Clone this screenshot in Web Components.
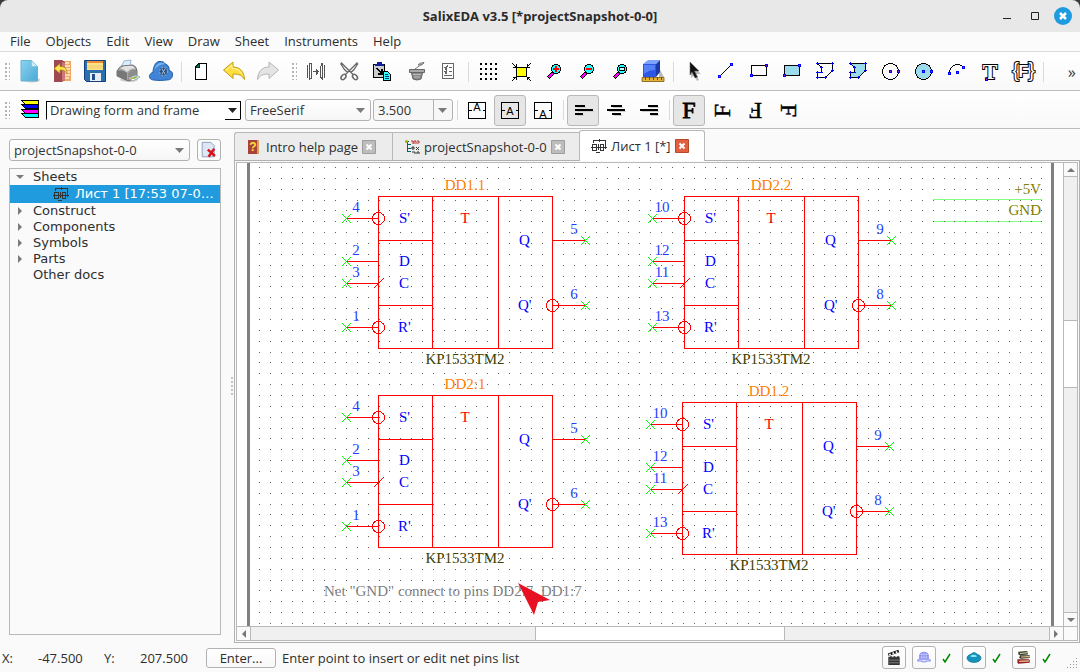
<!DOCTYPE html>
<html lang="en">
<head>
<meta charset="utf-8">
<title>SalixEDA v3.5</title>
<style>
  html, body { height: 100%; margin: 0; background: #3a3a3a; }
  body { font: 13px/16px "Open Sans", "Noto Sans", sans-serif; color: #2e2e2e; }
</style>
</head>
<body>
<salix-window></salix-window>
<script>
const mark = (x, y) => `<path fill="#00f" d="M${x - 1.5} ${y - 1.5}h3v3h-3z"/><path fill="#c2a" d="M${x - .5} ${y - .5}h1v1h-1z"/>`;
const lens = inner => `<g shape-rendering="crispEdges"><path d="M6 19l5-5" stroke="#000" stroke-width="4"/><path d="M6.500 18.500l4-4" stroke="#f0f" stroke-width="2.500"/><circle cx="14" cy="10" r="4.500" fill="#2ff" stroke="#000"/>${inner}</g>`;
const poly = fill => `<path d="M4.500 4.500h15v7l-7 7h-8v-5h4v-5z" fill="${fill}" stroke="#000" shape-rendering="crispEdges"/><path stroke="#00f" shape-rendering="crispEdges" d="M3 4.500h3M4.500 3v3M18 4.500h3M19.500 3v3M18 11.500h3M19.500 10v3M11 18.500h3M12.500 17v3M3 18.500h3M4.500 17v3M3 13.500h3M4.500 12v3M7 8.500h3M8.500 7v3M7 13.500h3"/>`;
const boxA = y => `<path d="M3.500 4.500h17v16h-17zM3.500 12.500h3M17.500 12.500h3" fill="none" stroke="#000" shape-rendering="crispEdges"/><text x="12" y="${y}" text-anchor="middle" font-family="Liberation Sans" font-size="11">A</text>`;
const rotF = a => `<text transform="rotate(${a} 12.500 12.500)" x="12.500" y="20" text-anchor="middle" font-family="Liberation Serif" font-size="24" stroke="#000" stroke-width=".4">F</text>`;
const SHEET = '<g fill="none" stroke="#333" shape-rendering="crispEdges"><path d="M2.500 5v-2.500h12v8h-1M1.500 6.500h4v6h-4zM9.500 6.500h3v6h-3zM0 9.500h16M7.500 6v6M5 14.500h4M8.500 1v3"/></g>';
const ICONS = {
  new: `<defs><linearGradient id="g" x2="1" y2="1"><stop stop-color="#8bd3ee"/><stop offset="1" stop-color="#4aa9d6"/></linearGradient></defs><ellipse cx="15" cy="21" rx="8" ry="2.500" fill="#ccc"/><path d="M4 1.500h10.500l6 6v14.500H4z" fill="url(#g)" stroke="#6ab4d2"/><path d="M14.500 1.500v6h6z" fill="#c9edfa" stroke="#7cc3de" stroke-width=".7"/>`,
  open: `<path d="M7 2h14v20H7z" fill="#f0a862"/><path d="M15 4h4M15 7h5M14 10h6M14 13h6M14 16h6M14 19h5" stroke="#fff0c8" stroke-width="1.500"/><path d="M4 1h8l3 2v18l-3 2H4z" fill="#a04850"/><path d="M12 3l3 1v17l-3 1z" fill="#cc777a"/><path d="M4 9.500l6-5v3c5 0 7 2 7 7-2-3-3.500-3.500-7-3.500v3.500z" fill="#ffe14a" stroke="#a87b1a" stroke-width=".7"/>`,
  save: `<path d="M1.500 1.500h21v21H3.500l-2-2z" fill="#2a6fae" stroke="#173f7d"/><path d="M4 2h16v9H4z" fill="#ffe28a"/><path d="M4 2h16v2H4z" fill="#f08c30"/><path d="M4 7h16M4 9h16" stroke="#e8bf5a" stroke-width=".7"/><path d="M7 14h11v8H7z" fill="#e9eef4"/><path d="M9 15h3v6H9z" fill="#234f8d"/>`,
  print: `<ellipse cx="13" cy="20.500" rx="9" ry="2.500" fill="#ccc"/><path d="M5 8l3-6 7-1-1 7z" fill="#dcecff" stroke="#88a5c5" stroke-width=".8"/><path d="M1 12q2-4 5-5l11-1q4 2 4 6v6l-8 4-12-5z" fill="#a9a9a9" stroke="#555" stroke-width=".8"/><path d="M1 12q5-2 10 2v8L1 17z" fill="#777"/><path d="M4 9q5-3 13-2l2 3q-4-2-8 3-3-3-7-4z" fill="#e2e2e2"/><path d="M12 15q3-6 8-4v6l-8 4z" fill="#8d8d8d"/><path d="M12 19l8-3 4 2-7 4z" fill="#eaf6ff" stroke="#789" stroke-width=".6"/><path d="M16 19l4-2 2 1-4 2z" fill="#74b843"/><path d="M14 19l2-1 1 1.500-2 1z" fill="#dd9c1f"/>`,
  cloud: `<path d="M5 21C1 21-.500 18 1 15.500c1-1.500 2-2 3-2C4 9 6 3 10 2.500c4-.5 5 1 6.500 2.500 3 1 4 4 3.500 6.500 3 .5 4 3 3.500 5-.5 3.500-3 4.500-6 4.500-4 .5-8 .7-12.500 0z" fill="#3f84d6" stroke="#205aab"/><path d="M5 11c2-7 7-9 11-6-4 0-8 2-11 6z" fill="#7db3ef"/><circle cx="14.500" cy="12.500" r="4" fill="#244f80" stroke="#8099b5" stroke-width="1.500" stroke-dasharray="2 1.200"/><path d="M13 10l3 5M16 10l-3 5" stroke="#a9c4e2" fill="none"/>`,
  page: `<g shape-rendering="crispEdges"><path d="M9.500 4.500h8v16h-11V7.500z" fill="#fff" stroke="#000"/><path d="M6 8.500L10.500 4v4.500z" fill="#087a68" stroke="#000" stroke-width=".6"/></g>`,
  undo: `<path d="M1.500 11L11 3v5c7 0 11 4.500 11.500 12.500-2.500-4-5-5.500-11.500-5.500v4.500z" fill="#ffdf3d" stroke="#c39a17"/><path d="M4 11l6-5v3.500c5 0 8 2 9.500 5" fill="none" stroke="#fff7a8"/>`,
  redo: `<path d="M23.500 11L14 3v5C7 8 3 12.500 2.500 20.500 5 16.500 7.500 15 14 15v4.500z" fill="#e4e4e4" stroke="#b5b5b5"/>`,
  mirror: `<g fill="none" stroke="#555" shape-rendering="crispEdges"><path d="M3.500 6v13M5.500 4.500v16M7.500 6.500v12M20.500 6v13M18.500 4.500v16M16.500 6.500v12M5 4.500h2v2M19 4.500h-2v2M5 19.500h2v-2M19 19.500h-2v-2M9 12.500h6M13.500 10.500v4M12.500 9.500v6"/></g>`,
  cut: `<g fill="none" stroke="#666"><path d="M4 3.500l12 12M20.500 3.500l-12 12M3.500 4.500l4 6 3 3M21 4.500l-4 6-3 3" stroke-width="1.300"/><ellipse cx="6.500" cy="18" rx="2" ry="3" transform="rotate(40 6.500 18)" stroke-width="1.500"/><ellipse cx="18" cy="18" rx="2" ry="3" transform="rotate(-40 18 18)" stroke-width="1.500"/></g>`,
  paste: `<g shape-rendering="crispEdges"><path d="M3.500 5.500h11v13h-11z" fill="#ccc" stroke="#000"/><path d="M7 3h5v2h2v2H5V5h2z" fill="#129"/><path d="M7 9l4 5M12 10v5H8" stroke="#000" stroke-width="1.500" fill="none"/><path d="M13.500 12.500h4l3 3v6h-7z" fill="#3ff" stroke="#000"/><path d="M15 15.500h3M15 17.500h4M15 19.500h4" stroke="#036"/></g>`,
  bucket: `<path d="M8 12h12l-2 8q-4 2-8 0z" fill="#888" stroke="#666"/><path d="M6.500 10.500h15v3h-15z" fill="#aaa" stroke="#666"/><path d="M10 15.500h8M11 18h6" stroke="#bbb"/><path d="M15 6q0-2 6-2.500-1 3-6 2.500zM12 10q4-3 9-6" fill="#eee" stroke="#777"/>`,
  list: `<g fill="none" stroke="#666" shape-rendering="crispEdges"><path d="M6.500 4.500h11v15h-11zM13 8.500h3M13 12.500h3M8 16.500h8"/><path d="M8 8h1v2h1V7h1V6M8 12h1v2h1v-3h1"/></g>`,
  grid: `<path fill="#000" shape-rendering="crispEdges" d="${[4, 9, 14, 19].map(y => [4, 9, 14, 19].map(x => `M${x} ${y}h2v2h-2z`).join('')).join('')}"/>`,
  fit: `<g shape-rendering="crispEdges"><path d="M7.500 8.500h10v9h-10z" fill="#ff0" stroke="#000"/><path d="M3 4l4 4M7 5v3H4M22 4l-4 4M18 5v3h3M3 22l4-4M4 18.500h3V21M22 22l-4-4M21 18.500h-3V21" fill="none" stroke="#000"/></g>`,
  zoomin: lens('<path d="M11 10h6M14 7v6" stroke="#f00" stroke-width="2"/>'),
  zoomout: lens('<path d="M11 10h6" stroke="#f00" stroke-width="2"/>'),
  zoomwin: lens('<path d="M11.500 8.500h5v3h-5z" fill="#cff" stroke="#000"/>'),
  cube: `<path d="M18 9l5 9h-5z" fill="#bbb"/><path d="M1 18.500h22v4H1z" fill="#e4b239" stroke="#7b5a12" stroke-width=".8"/><path d="M4.500 18v3M8.500 18v3M12.500 18v3M16.500 18v3M20.500 18v3" stroke="#6e4c0e"/><path d="M2 5h13v13H2z" fill="#2c57e6"/><path d="M2 5l5-4h12l-4 4z" fill="#7da3ff"/><path d="M15 5l4-4v12l-4 5z" fill="#173aa8"/><path d="M3 6h11v5q-6 0-11 4z" fill="#5580f6"/>`,
  arrow: `<path d="M10 5l10 10h-5l3 6-2 1-3-6-3 3z" fill="#bbb"/><path d="M9 3l9 9h-4.500l3 6-2.500 1-3-6-2 3z" fill="#111" stroke="#666" stroke-width=".6"/>`,
  line: `<path d="M5 18L17.500 5.500" stroke="#000" shape-rendering="crispEdges"/>${mark(5.5, 17.5)}${mark(17.5, 5.5)}`,
  rect: `<path d="M4.500 6.500h15v10h-15z" fill="none" stroke="#000" shape-rendering="crispEdges"/>${mark(4.5, 16.5)}${mark(19.5, 6.5)}`,
  rectf: `<path d="M4.500 6.500h15v10h-15z" fill="#9bdcec" stroke="#000" shape-rendering="crispEdges"/>${mark(4.5, 16.5)}${mark(19.5, 6.5)}`,
  poly: poly('none'), polyf: poly('#9bdcec'),
  circle: `<circle cx="11.500" cy="12.500" r="8" fill="none" stroke="#000" shape-rendering="crispEdges"/>${mark(11.5, 12.5)}${mark(19.5, 12.5)}`,
  circlef: `<circle cx="11.500" cy="12.500" r="8" fill="#9bdcec" stroke="#000" shape-rendering="crispEdges"/>${mark(11.5, 12.5)}${mark(19.5, 12.5)}`,
  arc: `<path d="M4.500 14.500C4 6 14 3 18.500 8.500" fill="none" stroke="#000" shape-rendering="crispEdges"/>${mark(4.5, 14.5)}${mark(18.5, 8.5)}${mark(12.5, 13.5)}`,
  text: `<text x="12" y="20" text-anchor="middle" font-family="Liberation Serif" font-weight="bold" font-size="22" fill="#fff" stroke="#000" stroke-width="2" paint-order="stroke">T</text>${mark(8.5, 20.5)}`,
  formula: `<g font-family="Liberation Sans" text-anchor="middle" fill="#fff" stroke="#000" stroke-width="2" paint-order="stroke"><text x="4.500" y="18" font-size="20">{</text><text x="12.500" y="18" font-size="16" font-weight="bold">F</text><text x="20.500" y="18" font-size="20">}</text></g>`,
  atop: boxA(13), amid: boxA(17), abot: boxA(20),
  left: `<path d="M4 8h10M4 12h18M4 16h8" stroke="#000" stroke-width="2" shape-rendering="crispEdges"/><path d="M6 9.500h9M6 13.500h17M6 17.500h7" stroke="#ccc"/>`,
  center: `<path d="M7 8h11M3 12h18M8 16h9" stroke="#000" stroke-width="2" shape-rendering="crispEdges"/><path d="M9 9.500h10M5 13.500h17M10 17.500h8" stroke="#ccc"/>`,
  right: `<path d="M11 8h10M3 12h18M13 16h8" stroke="#000" stroke-width="2" shape-rendering="crispEdges"/><path d="M12 9.500h10M5 13.500h17M14 17.500h8" stroke="#ccc"/>`,
  f0: `<text x="12" y="20" text-anchor="middle" font-family="Liberation Serif" font-size="24" stroke="#000" stroke-width=".8">F</text>`,
  f1: rotF(-90), f2: rotF(180), f3: rotF(90),
  layers: `<g shape-rendering="crispEdges"><path d="M4 2h17v4H8z" fill="#ff0" stroke="#000"/><path d="M4 6h17v4H8z" fill="#00f" stroke="#000"/><path d="M4 11h17v4H8z" fill="#f0f" stroke="#000"/><path d="M4 15h17v4H8z" fill="#0ff" stroke="#000"/></g>`,
  closedoc: `<path d="M4 3h11l4 4v14H4z" fill="#dfe6f4" stroke="#7d8fb0"/><path d="M11 12l9 8M19 11l-7 10" stroke="#d8121c" stroke-width="3"/>`,
  clap: `<g transform="translate(3 2)"><path d="M3 9h13v10H3z" fill="#333"/><path d="M3 7.500L15 3" stroke="#111" stroke-width="3"/><path d="M4 7.500l12-4.500" stroke="#fff" stroke-width="2" stroke-dasharray="2 2"/><path d="M3 9.500h13" stroke="#fff" stroke-dasharray="2 2"/><path d="M4 13.500h11M4 16.500h11" stroke="#888"/></g>`,
  globe: `<path d="M7 14q-1-8 5.500-8T18 14z" fill="#7d83ee"/><path d="M8 9h9M7 12h11M10 7v7M12.500 6v8M15 7v7" stroke="#d3d6ff" stroke-width=".8"/><path d="M6 14.500h13l1 2h-5v1h-5v-1H5z" fill="#dfe1ff" stroke="#7d83ee"/>`,
  drop: `<path d="M12.500 7c2 0 3 2 6 3 3 1.500 3 8-6 8-9 0-9-6.500-6-8 3-1 4-3 6-3z" fill="#1593bd" stroke="#0b6f96"/><path d="M8 11q4-3 8 0-3 2-8 0z" fill="#8be9fa"/>`,
  books: `<path d="M6 6l9-1 2 1v3l-9 1-2-1z" fill="#3b4a32"/><path d="M8 8l9-1M9 12h10" stroke="#eee1b4"/><path d="M8 10h11v3l-10 1-2-1z" fill="#3a3224"/><path d="M9 12l10-.5" stroke="#e8ca94" stroke-width="1.200"/><path d="M5 14.500h13l1 1v3l-13 1-1-1z" fill="#8e2026"/><path d="M7 17l11-.5" stroke="#e7bd93" stroke-width="1.500"/>`,
};
const icon = (n, s = 25) => `<svg width="${s}" height="${s}" viewBox="0 0 25 25" aria-hidden="true">${ICONS[n]}</svg>`;

function define(name, css, html) {
  const t = document.createElement('template');
  customElements.define(name, class extends HTMLElement {
    connectedCallback() {
      if (this.shadowRoot) return;
      const root = this.attachShadow({ mode: 'open' });
      t.innerHTML = `<style>*{box-sizing:border-box}${css}</style>` + (typeof html === 'function' ? html(this) : html);
      root.append(t.content.cloneNode(true));
    }
  });
}

define('tool-button', `
  :host { display: block; width: 33px; flex: none; }
  button { display: flex; align-items: center; width: 32px; height: 31px; margin: 0; padding: 0 2px 0 3px; border: 1px solid transparent; border-radius: 3px; background: none; }
  :host([pressed]) button { background: #e6e6e6; border-color: #b9b9b9; }
  svg { display: block; flex: none; overflow: visible; }`,
  el => `<button aria-label="${el.getAttribute('icon')}">${icon(el.getAttribute('icon'))}</button>`);

define('tool-sep', `
  :host { display: block; width: 7px; height: 20px; flex: none; }
  i { display: block; width: 1px; height: 20px; margin-left: 3px; background: #dadada; }`, '<i></i>');

define('tool-grip', `
  :host { display: block; width: 13px; flex: none; }
  :host([wide]) { width: 16px; padding-left: 3px; }
  i { display: block; width: 5px; height: 17px; margin-left: 5px; background: radial-gradient(circle at 1px 1px, #b4b4b4 1px, transparent 1px) 0 0 / 4px 4px; }`, '<i></i>');

define('combo-box', `
  :host { display: block; flex: none; position: relative; width: var(--w); }
  select { appearance: none; display: block; width: 100%; height: 22px; margin: 0; padding: 0 22px 0 4px; font: inherit; color: #333; background: linear-gradient(#fff, #f6f6f6); border: 1px solid #b2b2b2; border-radius: 3px; }
  svg { position: absolute; right: 6px; top: 9px; pointer-events: none; }
  :host([sunken]) select { height: 19px; border-radius: 0; background: #fff; border-color: #000 #000 #fff #000; padding: 0 20px 0 3px; }
  :host([sunken]) svg { right: 4px; top: 7px; }
  :host([sunken])::after { content: ""; position: absolute; right: 1px; top: 1px; width: 15px; height: 17px; border-bottom: 1px solid #000; pointer-events: none; }
  :host([editable]) select { background: #f7f7f7; }
  :host([editable])::after { content: ""; position: absolute; right: 19px; top: 1px; width: 1px; height: 20px; background: #b2b2b2; }`,
  el => `<select aria-label="${el.getAttribute('label')}"><option>${el.getAttribute('value')}</option></select>
  <svg width="9" height="5"><path d="M0 0h9L4.500 5z" fill="${el.hasAttribute('sunken') ? '#222' : '#7a7a7a'}"/></svg>`);

define('title-bar', `
  :host { display: flex; align-items: center; height: 32px; background: #e8e8e8; border-radius: 8px 8px 0 0; justify-content: flex-end; padding-right: 8px; gap: 8px; }
  h1 { flex: 1; margin: 0 -84px 0 0; padding-left: 8px; font: bold 13px/18px "Open Sans", sans-serif; text-align: center; color: #2b2b2b; }
  button { width: 20px; height: 20px; border: 0; padding: 0; background: none; display: block; position: relative; }
  svg { display: block; }`,
  `<h1>SalixEDA v3.5 [*projectSnapshot-0-0]</h1>
   <button aria-label="Minimize"><svg width="20" height="20"><path d="M7 12h8v1H7z" fill="#222"/></svg></button>
   <button aria-label="Maximize"><svg width="20" height="20"><path d="M7.500 6.500h7v7h-7z" fill="none" stroke="#222"/></svg></button>
   <button aria-label="Close"><svg width="20" height="20"><circle cx="11" cy="10" r="9" fill="#1e9be0"/><path d="M8 7l6 6M14 7l-6 6" stroke="#fff" stroke-width="2.500"/></svg></button>`);

define('menu-bar', `
  :host { display: block; background: #fbfbfb; border-bottom: 1px solid #dcdcdc; }
  nav { display: flex; gap: 15px; padding: 0 10px; }
  button { border: 0; padding: 0; margin: 0; background: none; font: inherit; line-height: 19px; color: inherit; }`,
  '<nav>' + ['File', 'Objects', 'Edit', 'View', 'Draw', 'Sheet', 'Instruments', 'Help'].map(m => `<button>${m}</button>`).join('') + '</nav>');

const btns = list => list.split(' ').map(n => n === '|' ? '<tool-sep></tool-sep>' : n === ':' ? '<tool-grip wide></tool-grip>' :
  n[0] === '*' ? `<tool-button pressed icon="${n.slice(1)}"></tool-button>` : `<tool-button icon="${n}"></tool-button>`).join('');

define('tool-bar', `
  :host { display: flex; align-items: center; height: 38px; padding-top: 1px; background: linear-gradient(#fff, #f9f9f9); border-bottom: 1px solid #bcbcbc; overflow: hidden; }
  :host([tall]) { height: 39px; }`, '<slot></slot>');

define('doc-tab', `
  :host { display: flex; align-items: center; gap: 4px; width: var(--w); height: 28px; padding: 0 16px 0 11px; background: #ececec; border: 1px solid #b9b9b9; border-bottom: 0; border-right-width: 0; }
  :host([first]) { border-radius: 3px 0 0 0; }
  :host([active]) { height: 31px; padding-right: 15px; background: #fff; border-right-width: 1px; border-radius: 3px 3px 0 0; margin-bottom: -1px; padding-bottom: 1px; position: relative; }
  svg { display: block; flex: none; }
  span { white-space: nowrap; }
  button { border: 0; padding: 0; margin-left: auto; background: none; display: block; }`,
  el => {
    const a = el.hasAttribute('active');
    const pic = {
      help: '<path d="M2 1h11v14H2z" fill="#a8423a"/><path d="M11 1h2v14h-2z" fill="#d9a05a"/><text x="7" y="12" text-anchor="middle" font-family="Liberation Sans" font-weight="bold" font-size="12" fill="#ffe03a">?</text>',
      tree: '<path d="M2 2.500h3M3.500 3v10M3 5.500h4M3 9.500h4M3 12.500h4" stroke="#066" fill="none"/><path d="M7 2h2v3M10 5V2h2v3M13 2h2v2h-2" stroke="#b33" fill="none"/><path d="M8 8h2v2H8zM12 8l3 3M15 8l-3 3M8 13h3v2M13 15v-2h2v2" stroke="#333" fill="none"/><circle cx="2.500" cy="2.500" r="1.500" fill="#aa0"/>',
      sheet: SHEET
    }[el.getAttribute('icon')];
    return `<svg width="16" height="16">${pic}</svg><span>${el.getAttribute('label')}</span>
    <button aria-label="Close tab"><svg width="14" height="14"><path d="M.500.500h13v13H.500z" fill="${a ? '#e2603f' : '#bdbdbd'}" stroke="${a ? '#b8482c' : '#9d9d9d'}"/><path d="M4.500 4.500l5 5M9.500 4.500l-5 5" stroke="#fff" stroke-width="2"/></svg></button>`;
  });

define('tree-view', `
  :host { display: block; border: 1px solid #b9b9b9; background: #fafafa; font: 13px/16px "DejaVu Sans", sans-serif; overflow: hidden; }
  ul { list-style: none; margin: 0; padding: 0; }
  li > div { display: flex; align-items: center; height: 16px; gap: 9px; padding-left: 6px; }
  li ul div { height: 18px; background: #1f9bde; color: #fff; padding-left: 43px; gap: 6px; }
  li ul span { white-space: nowrap; }
  svg { flex: none; }`,
  `<ul><li><div><svg width="8" height="8"><path d="M0 2h8L4 6z" fill="#7a7a7a"/></svg>Sheets</div>
   <ul><li><div><svg width="16" height="16">${SHEET}</svg><span>Лист 1 [17:53 07-0…</span></div></li></ul></li>` +
  ['Construct', 'Components', 'Symbols', 'Parts', 'Other docs'].map((t, i) => `<li><div><svg width="8" height="8">${i < 4 ? '<path d="M2 0v8l4-4z" fill="#7a7a7a"/>' : ''}</svg>${t}</div></li>`).join('') + '</ul>');

define('project-panel', `
  :host { display: flex; flex-direction: column; width: 221px; flex: none; gap: 7px; padding: 10px 0 8px 9px; }
  .row { display: flex; gap: 7px; }
  combo-box { flex: 1; }
  .x { width: 24px; height: 22px; padding: 0; border: 1px solid #b2b2b2; border-radius: 3px; background: #fcfcfc; display: flex; align-items: center; justify-content: center; }
  tree-view { flex: 1; min-height: 0; }`,
  `<div class="row"><combo-box label="Project" value="projectSnapshot-0-0"></combo-box><button class="x" aria-label="Close project">${icon('closedoc', 20)}</button></div>
   <tree-view></tree-view>`);

define('chip-symbol', `
  :host { display: block; position: absolute; left: var(--x); top: var(--y); width: 260px; height: 200px; }
  svg { display: block; font: 15px "Liberation Serif", serif; }
  .l { fill: none; stroke: #f00; shape-rendering: crispEdges; }
  .g { stroke: #0f0; shape-rendering: crispEdges; }
  .n { fill: #1f3fff; } .b { fill: #00f; }`,
  el => {
    const pins = el.getAttribute('pins').split(' ');
    const at = [[10, 42, 'L'], [10, 85, 'L'], [10, 107, 'L'], [10, 151, 'L'], [249, 64, 'R'], [249, 129, 'R']];
    const pin = ([x, y, side], i) => {
      const L = side === 'L';
      return `<path class="l" d="M${L ? 10 : 217} ${y}.500h32"/>
        <path class="g" d="M${x - 4} ${y - 4}l9 9M${x + 5} ${y - 4}l-9 9"/>
        <text class="n" x="${L ? 20 : 238}" y="${y - 6}" text-anchor="middle">${pins[i]}</text>`;
    };
    return `<svg width="260" height="200">
      <path class="l" d="M42.500 20.500h174v152h-174zM96.500 20v152M162.500 20v152M42 64.500h54M42 129.500h54M38 112l10-10"/>
      ${at.map(pin).join('')}
      <g class="l"><circle cx="42.500" cy="42.500" r="6"/><circle cx="42.500" cy="151.500" r="6"/><circle cx="216.500" cy="129.500" r="6"/></g>
      <g class="b"><text x="63" y="47">S'</text><text x="63" y="90">D</text><text x="63" y="112">C</text><text x="62" y="156">R'</text><text x="183" y="69">Q</text><text x="182" y="134">Q'</text></g>
      <text x="129" y="47" text-anchor="middle" fill="#f00">T</text>
      <text x="129" y="14" text-anchor="middle" fill="#ff8000">${el.getAttribute('ref')}</text>
      <text x="129" y="188" text-anchor="middle" fill="#404000">KP1533TM2</text></svg>`;
  });

define('sheet-canvas', `
  :host { display: block; position: relative; overflow: hidden; background: #fff; }
  .page { position: absolute; left: 0; top: 0; display: block; font: 15px "Liberation Serif", serif; }`,
  () => {
    let d = '';
    for (let r = 0; r < 43; r++) for (let c = 0; c < 73; c++)
      d += `M${Math.round(22 + c * 10.867)} ${Math.round(4 + r * 10.857)}h1v1h-1z`;
    return `<svg class="page" width="826" height="464">
      <path d="M10 0h3v464h-3zM814 0h3v464h-3z" fill="#808080"/>
      <path d="M696 36.500h109M696 58.500h109" stroke="#80ff80" shape-rendering="crispEdges"/>
      <path d="${d}" fill="#606060" shape-rendering="crispEdges"/>
      <g fill="#808000" text-anchor="end"><text x="804" y="31">+5V</text><text x="804" y="52">GND</text></g>
      <text x="87" y="433" fill="#808080">Net "GND" connect to pins DD2:7, DD1:7</text></svg>
      <chip-symbol style="--x:99px;--y:13px" ref="DD1.1" pins="4 2 3 1 5 6"></chip-symbol>
      <chip-symbol style="--x:405px;--y:13px" ref="DD2.2" pins="10 12 11 13 9 8"></chip-symbol>
      <chip-symbol style="--x:99px;--y:212px" ref="DD2:1" pins="4 2 3 1 5 6"></chip-symbol>
      <chip-symbol style="--x:403px;--y:219px" ref="DD1.2" pins="10 12 11 13 9 8"></chip-symbol>
      <svg class="page" width="826" height="464"><path d="M281 420l32 17-12 2-4 13z" fill="#e81123"/></svg>`;
  });

define('scroll-bar', `
  :host { display: flex; background: #f0f0f0; }
  :host([dir=v]) { flex-direction: column; border-left: 1px solid #b9b9b9; }
  :host([dir=h]) { border-top: 1px solid #b9b9b9; }
  button { flex: 0 0 14px; padding: 0; border: 0 solid #b9b9b9; background: #fafafa; display: flex; align-items: center; justify-content: center; }
  .t { flex: 1 1 0; flex-grow: var(--n); }
  .k { background: #fff; border: 0 solid #b9b9b9; }
  :host([dir=v]) .k { border-width: 1px 0; } :host([dir=h]) .k { border-width: 0 1px; }
  :host([dir=v]) .a { border-bottom-width: 1px; } :host([dir=v]) .z { border-top-width: 1px; }
  :host([dir=h]) .a { border-right-width: 1px; } :host([dir=h]) .z { border-left-width: 1px; }`,
  el => {
    const v = el.getAttribute('dir') === 'v', s = el.getAttribute('split').split(' ');
    const tri = p => `<svg width="8" height="8"><path d="${p}" fill="#777"/></svg>`;
    return `<button class="a" aria-label="Back">${tri(v ? 'M0 6h8L4 2z' : 'M6 0v8L2 4z')}</button>
    <div class="t" style="--n:${s[0]}"></div><div class="t k" style="--n:${s[1]}"></div><div class="t" style="--n:${s[2]}"></div>
    <button class="z" aria-label="Forward">${tri(v ? 'M0 2h8L4 6z' : 'M2 0v8l4-4z')}</button>`;
  });

define('doc-area', `
  :host { display: flex; flex-direction: column; flex: 1; min-width: 0; }
  .tabs { display: flex; align-items: flex-end; height: 31px; flex: none; }
  .frame { flex: 1; min-height: 0; display: grid; padding: 1px; border: 1px solid #b0b0b0; background: #fafafa; }
  .in { display: grid; grid-template: minmax(0, 1fr) 14px / minmax(0, 1fr) 14px; border: 1px solid #b9b9b9; min-height: 0; }
  .corner { border: solid #b9b9b9; border-width: 1px 0 0 1px; }`,
  `<div class="tabs"><doc-tab first style="--w:158px" icon="help" label="Intro help page"></doc-tab><doc-tab style="--w:187px" icon="tree" label="projectSnapshot-0-0"></doc-tab><doc-tab active style="--w:126px" icon="sheet" label="Лист 1 [*]"></doc-tab></div>
   <div class="frame"><div class="in"><sheet-canvas></sheet-canvas><scroll-bar dir="v" split="144 66 225"></scroll-bar><scroll-bar dir="h" split="285 248 265"></scroll-bar><div class="corner"></div></div></div>`);

define('status-bar', `
  :host { display: flex; align-items: center; height: 29px; padding: 0 2px 0 2px; flex: none; background: #fafafa; }
  .k { width: 36px; } .y { width: 36px; } .v { width: 66px; }
  button { font: inherit; color: inherit; padding: 0; margin: 0; border: 1px solid #b2b2b2; border-radius: 3px; background: linear-gradient(#fff, #f8f8f8); }
  .enter { width: 70px; height: 20px; line-height: 16px; }
  .msg { flex: 1; padding-left: 6px; white-space: nowrap; }
  .ic { width: 24px; height: 23px; margin-left: 6px; display: flex; align-items: center; justify-content: center; }
  .ok { width: 20px; } .ok svg { display: block; margin-left: 6px; }
  .grip { width: 12px; height: 12px; margin: 12px 0 0 10px; }`,
  () => {
    const ok = '<span class="ok"><svg width="9" height="10"><path d="M1 6l2 3 5-8" fill="none" stroke="#080" stroke-width="1.500"/></svg></span>';
    const b = (n, l) => `<button class="ic" aria-label="${l}">${icon(n)}</button>`;
    return `<span class="k">X:</span><span class="v">-47.500</span><span class="y">Y:</span><span class="v">207.500</span>
    <button class="enter">Enter...</button><span class="msg">Enter point to insert or edit net pins list</span>
    ${b('clap', 'Record')}${b('globe', 'Network')}${ok}${b('drop', 'Cloud')}${ok}${b('books', 'Library')}${ok}
    <svg class="grip"><path d="M10 0h1v1h-1zM7 3h1v1H7zM10 3h1v1h-1zM4 6h1v1H4zM7 6h1v1H7zM10 6h1v1h-1zM1 9h1v1H1zM4 9h1v1H4zM7 9h1v1H7zM10 9h1v1h-1z" fill="#999"/></svg>`;
  });

define('salix-window', `
  :host { display: flex; flex-direction: column; height: 100vh; }
  main { flex: 1; min-height: 0; display: flex; background: #fafafa; }
  .split { width: 13px; flex: none; display: flex; align-items: center; justify-content: flex-end; }
  .split i { width: 3px; height: 18px; background: radial-gradient(circle at 1px 1px, #c4c4c4 1px, transparent 1px) 0 0 / 4px 4px; }
  .more { margin: 0 4px 0 auto; padding: 0; border: 0; background: none; font: 16px/16px "Noto Sans", sans-serif; color: #444; }
  .lay { margin-left: 4px; display: flex; width: 29px; flex: none; }
  combo-box { margin-right: 4px; } combo-box + combo-box { margin-right: 2px; } combo-box[editable] { margin-right: 1px; }`,
  `<title-bar></title-bar><menu-bar></menu-bar>
   <tool-bar tall><tool-grip></tool-grip>${btns('new open save print cloud | page undo redo : mirror cut paste bucket list | grid fit zoomin zoomout zoomwin cube | arrow line rect rectf poly polyf circle circlef arc text formula |')}<button class="more" aria-label="More tools">»</button></tool-bar>
   <tool-bar><tool-grip></tool-grip><span class="lay">${icon('layers')}</span>
     <combo-box sunken style="--w:195px" label="Layer" value="Drawing form and frame"></combo-box>
     <combo-box style="--w:126px" label="Font" value="FreeSerif"></combo-box>
     <combo-box editable style="--w:80px" label="Size" value="3.500"></combo-box><tool-sep></tool-sep>${btns('atop *amid abot | *left center right | *f0 f1 f2 f3')}</tool-bar>
   <main><project-panel></project-panel><div class="split"><i></i></div><doc-area></doc-area></main>
   <status-bar></status-bar>`);
</script>
</body>
</html>
